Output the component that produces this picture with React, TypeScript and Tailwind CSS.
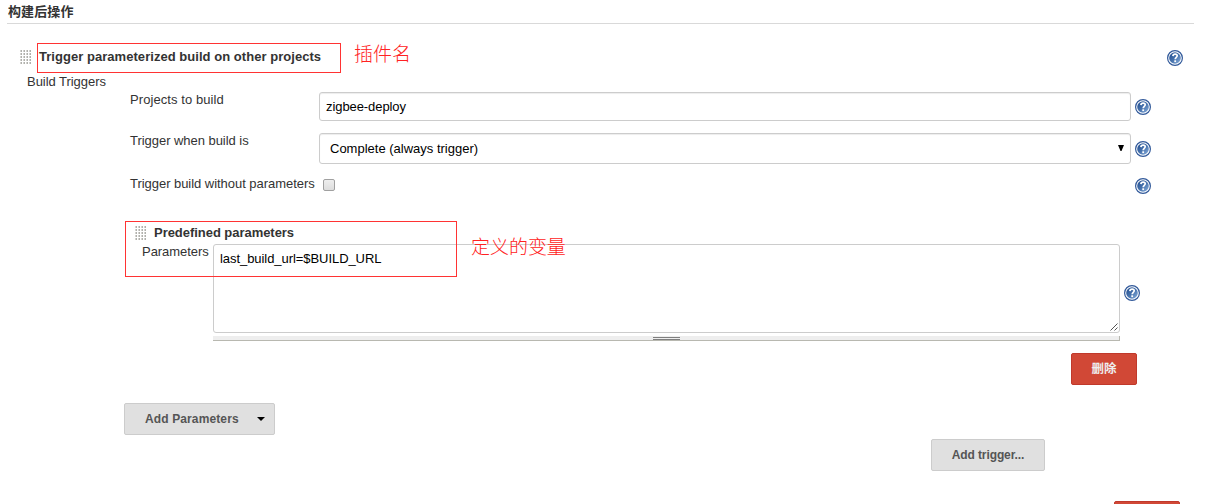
import React from "react";

function Help() {
  return (
    <svg width="16" height="16" viewBox="0 0 16 16" className="block shrink-0">
      <defs>
        <linearGradient id="helpFill" x1="0" y1="0" x2="1" y2="1">
          <stop offset="0" stopColor="#1f4a8c" />
          <stop offset="0.5" stopColor="#4672ad" />
          <stop offset="1" stopColor="#8db2de" />
        </linearGradient>
      </defs>
      <circle cx="8" cy="8" r="7.400" fill="#fff" stroke="#31599a" strokeWidth="1.2" />
      <circle cx="8" cy="8" r="5.800" fill="url(#helpFill)" />
      <path d="M5.900 6.100C6 4.700 6.900 4.100 8.100 4.100c1.300 0 2.100.7 2.100 1.700 0 1.500-2 1.600-2 3.400" fill="none" stroke="#fff" strokeWidth="1.700" />
      <rect x="7.300" y="10.300" width="1.800" height="1.800" fill="#fff" />
    </svg>
  );
}

function Grip() {
  return (
    <svg width="12" height="15" viewBox="0 0 12 15" className="block shrink-0">
      {[0, 1, 2, 3, 4].map((r) =>
        [0, 1, 2, 3].map((c) => (
          <g key={`${r}-${c}`}>
            <rect x={c * 3} y={r * 3} width="2" height="2" fill="#d4d4d0" />
            <rect x={c * 3 + 1} y={r * 3} width="1" height="2" fill="#b0b0ac" />
          </g>
        ))
      )}
    </svg>
  );
}

export default function App() {
  return (
    <div className="relative flex h-[504px] w-[1211px] flex-col overflow-hidden bg-white font-['Liberation_Sans','Noto_Sans_CJK_SC',sans-serif] text-[13px] leading-[18px] tracking-[-0.04px] text-[#333]">
      <h2 className="ml-[7px] h-6 w-[1187px] shrink-0 border-b border-[#d9d9d9] pt-[3px] pl-px text-[13px] font-bold tracking-[0.1px]">构建后操作</h2>

      <div className="mt-[23px] flex h-[25px] shrink-0 pr-7 pl-5">
        <div className="mt-[3px]"><Grip /></div>
        <h3 className="mt-px ml-[7px] flex-1 font-bold tracking-[0.04px]">Trigger parameterized build on other projects</h3>
        <div className="mt-[3px]"><Help /></div>
      </div>

      <div className="flex h-[19px] shrink-0 items-start pt-px pl-[27px]">Build Triggers</div>

      <div className="flex h-[42px] shrink-0 pl-[130px]">
        <label className="w-[189px] tracking-[0.08px]">Projects to build</label>
        <input readOnly value="zigbee-deploy" className="mt-px h-[29px] w-[812px] rounded-[3px] border border-[#ccc] px-[6px] tracking-[-0.08px] text-black shadow-[inset_0_1px_1px_rgba(0,0,0,0.075)] outline-none" />
        <div className="mt-2 ml-1"><Help /></div>
      </div>

      <div className="flex h-[42px] shrink-0 pl-[130px]">
        <label className="-mt-px w-[189px]">Trigger when build is</label>
        <div className="flex h-[31px] w-[812px] items-center justify-between rounded-[3px] border border-[#ccc] pr-[6px] pl-[10px] text-black shadow-[inset_0_1px_1px_rgba(0,0,0,0.075)]">
          <span className="tracking-normal">Complete (always trigger)</span>
          <svg width="6" height="6" viewBox="0 0 6 6" className="mb-[2px]"><path d="M0 0h6L3.500 6h-1z" fill="#000" /></svg>
        </div>
        <div className="mt-2 ml-1"><Help /></div>
      </div>

      <div className="flex h-12 shrink-0 pl-[130px]">
        <label className="w-[193px]">Trigger build without parameters</label>
        <div className="mt-[4px] h-3 w-3 rounded-[2px] border border-[#a0a0a0] bg-linear-to-b from-[#eee] to-[#ddd]" />
        <div className="mt-[3px] ml-[800px]"><Help /></div>
      </div>

      <div className="flex h-[21px] shrink-0 pl-[135px]">
        <div className="mt-[3px]"><Grip /></div>
        <h4 className="mt-px ml-[7px] font-bold">Predefined parameters</h4>
      </div>

      <div className="flex h-[109px] shrink-0 pl-[142px]">
        <label className="-mt-px w-[71px]">Parameters</label>
        <div className="w-[907px]">
          <div className="relative h-[89px] rounded-[3px] border border-[#ccc] px-[6px] pt-[5px] tracking-[-0.06px] text-black">
            last_build_url=$BUILD_URL
            <svg width="8" height="8" viewBox="0 0 8 8" className="absolute right-px bottom-px"><path d="M0.500 7.500l7-7M4.500 7.500l3-3" stroke="#555" fill="none" /></svg>
          </div>
          <div className="mt-[3px] flex h-[5px] justify-center border-r border-b border-[#b8b8b0] bg-[#eee]">
            <div className="mt-px h-[3px] w-[27px] border-y border-[#808080]" />
          </div>
        </div>
        <div className="mt-[41px] ml-1"><Help /></div>
      </div>

      <button className="ml-[1071px] flex h-8 w-[66px] shrink-0 items-center justify-center rounded-[2px] border border-[#c0392b] bg-[#d14836] text-[12.500px] font-bold text-[#eee]">删除</button>

      <button className="mt-[18px] ml-[124px] flex h-8 w-[151px] shrink-0 items-center rounded-[2px] border border-[#ccc] bg-[#e0e0e0] pl-5 text-[12px] font-bold tracking-[0.12px] text-[#555]">
        Add Parameters
        <svg width="8" height="4" viewBox="0 0 8 4" className="ml-[18px]"><path d="M0 0h8L4 4z" fill="#000" /></svg>
      </button>
      <button className="mt-1 ml-[931px] flex h-8 w-[114px] shrink-0 items-center justify-center rounded-[2px] border border-[#ccc] bg-[#e0e0e0] text-[12px] font-bold tracking-[-0.1px] text-[#555]">Add trigger...</button>
      <div className="mt-[30px] ml-[1114px] h-8 w-[66px] shrink-0 rounded-[2px] border border-[#c0392b] bg-[#d14836]" />

      <div className="absolute top-[43px] left-[37px] h-[30px] w-[304px] border border-[#f33]" />
      <div className="absolute top-[43px] left-[354px] text-[19px] leading-6 font-light text-[#f22]">插件名</div>
      <div className="absolute top-[221px] left-[125px] h-14 w-[332px] border border-[#f33]" />
      <div className="absolute top-[236px] left-[471px] text-[19px] leading-6 font-light text-[#f22]">定义的变量</div>
    </div>
  );
}
